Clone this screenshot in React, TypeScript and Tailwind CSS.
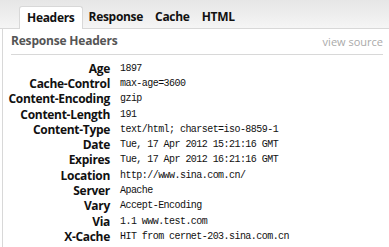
import React from "react";

const rows: [string, string][] = [
  ["Age", "1897"],
  ["Cache-Control", "max-age=3600"],
  ["Content-Encoding", "gzip"],
  ["Content-Length", "191"],
  ["Content-Type", "text/html; charset=iso-8859-1"],
  ["Date", "Tue, 17 Apr 2012 15:21:16 GMT"],
  ["Expires", "Tue, 17 Apr 2012 16:21:16 GMT"],
  ["Location", "http://www.sina.com.cn/"],
  ["Server", "Apache"],
  ["Vary", "Accept-Encoding"],
  ["Via", "1.1 www.test.com"],
  ["X-Cache", "HIT from cernet-203.sina.com.cn"],
];

const tabs = ["Headers", "Response", "Cache", "HTML"];

export default function App() {
  return (
    <div className="w-[389px] h-[247px] bg-white overflow-hidden font-['Open_Sans',sans-serif]">
      <div className="h-[29px] bg-gradient-to-b from-[#e6e6e6] to-[#f5f5f5] border-b border-[#d8d8d8] flex items-end pl-[19px]">
        {tabs.map((t, i) => (
          <div
            key={t}
            className={
              i === 0
                ? "h-[23px] px-[7px] -mb-px bg-white border border-b-0 border-[#d8d8d8] rounded-t-[3px] flex items-center text-[12px] font-bold text-[#111] tracking-[-0.3px] whitespace-nowrap"
                : "h-[23px] px-[6px] flex items-center text-[12px] font-bold text-[#111] tracking-[-0.3px] whitespace-nowrap"
            }
          >
            {t}
          </div>
        ))}
      </div>
      <div className="ml-[2px] border-l border-[#d8d8d8] h-[218px] pl-[8px] pr-[6px]">
        <div className="flex items-end justify-between h-[26px] pb-[4px] border-b border-[#d8d8d8]">
          <span className="text-[12px] font-bold text-[#555] tracking-[-0.2px] whitespace-nowrap">Response Headers</span>
          <span className="text-[11px] text-[#aaa] whitespace-nowrap">view source</span>
        </div>
        <div className="pt-[6px]">
          {rows.map(([k, v]) => (
            <div key={k} className="flex items-center h-[15.3px]">
              <div className="w-[99px] shrink-0 flex justify-end whitespace-nowrap text-[12px] font-bold text-[#111] tracking-[-0.3px] leading-none">
                {k}
              </div>
              <div className="pl-[10px] font-['Liberation_Mono',monospace] text-[10px] tracking-[-0.55px] text-[#111] whitespace-pre leading-none">
                {v}
              </div>
            </div>
          ))}
        </div>
      </div>
    </div>
  );
}
